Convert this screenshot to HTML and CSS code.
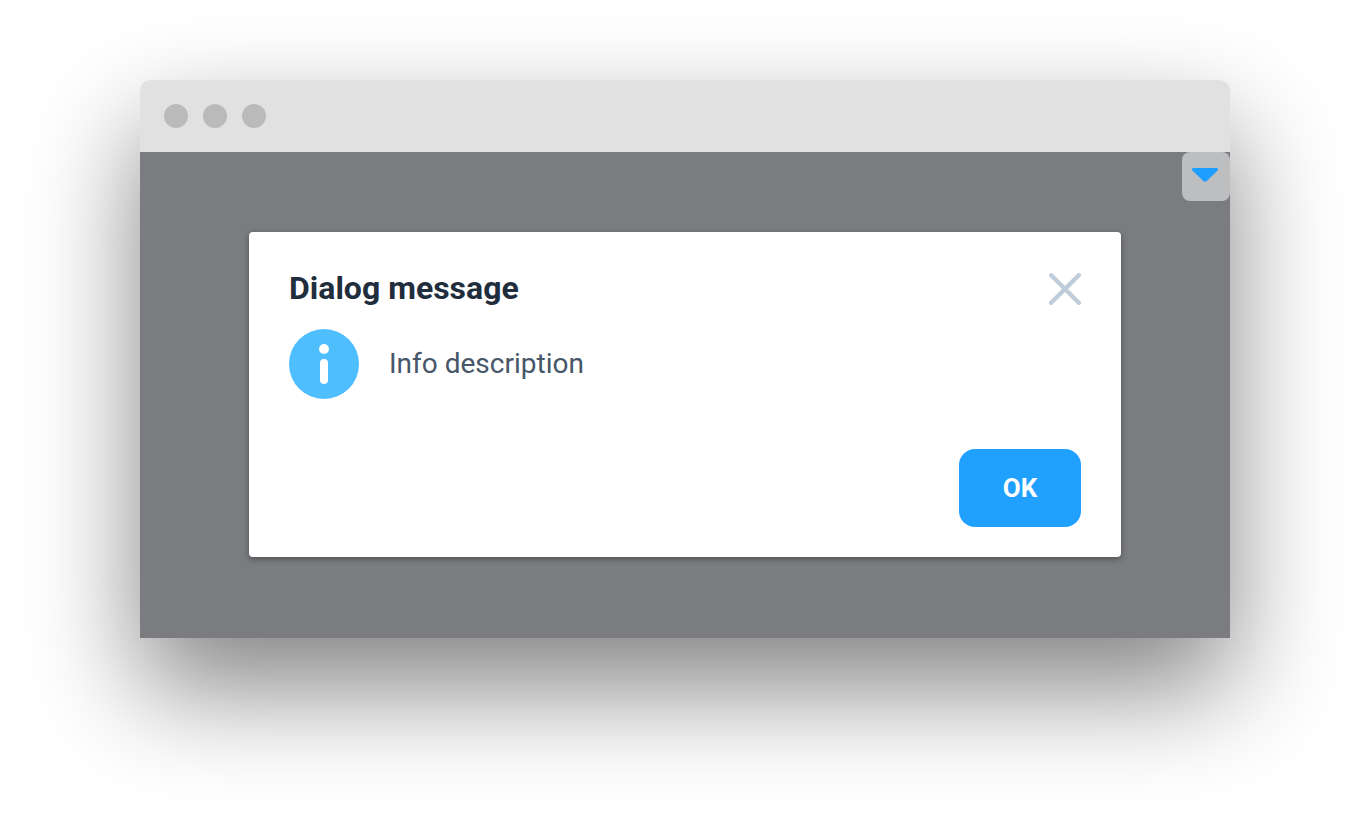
FILE: index.html
```html
<!DOCTYPE html>
<html lang="en">
<head>
<meta charset="utf-8">
<meta name="viewport" content="width=device-width, initial-scale=1">
<title>Dialog message</title>
<link rel="stylesheet" href="styles.css">
</head>
<body>
<div class="window">
  <header class="titlebar">
    <span class="dot"></span>
    <span class="dot"></span>
    <span class="dot"></span>
  </header>
  <main class="viewport">
    <button class="menu-toggle" type="button" aria-label="Open menu">
      <svg width="28" height="16" viewBox="0 0 28 16" aria-hidden="true"><path d="M2.600 1H25.400Q27.800 1.400 26.600 3.600L15.800 14Q14 15.600 12.200 14L1.400 3.600Q.2 1.400 2.600 1Z" fill="#1e9fff"/></svg>
    </button>
    <section class="dialog" role="dialog" aria-labelledby="dialog-title">
      <div class="dialog-head">
        <h1 class="dialog-title" id="dialog-title">Dialog message</h1>
        <button class="close" type="button" aria-label="Close">
          <svg width="32" height="32" viewBox="0 0 32 32" aria-hidden="true"><path d="M2.200 2.200L29.800 29.800M29.800 2.200L2.200 29.800" stroke="#bfccd9" stroke-width="4.400" stroke-linecap="round"/></svg>
        </button>
      </div>
      <div class="dialog-body">
        <svg width="70" height="70" viewBox="0 0 70 70" aria-hidden="true"><circle cx="35" cy="35" r="35" fill="#4fbeff"/><circle cx="35" cy="20" r="5" fill="#fff"/><rect x="31" y="30" width="8" height="25" rx="4" fill="#fff"/></svg>
        <p class="message">Info description</p>
      </div>
      <div class="dialog-actions">
        <button class="ok" type="button">OK</button>
      </div>
    </section>
  </main>
</div>
</body>
</html>
```
FILE: styles.css
```css
* {
  box-sizing: border-box;
}

body {
  margin: 0;
  padding: 80px 140px 200px;
  background: #fff;
  font-family: Roboto, "Liberation Sans", sans-serif;
  overflow: hidden;
}

.window {
  border-radius: 10px 10px 0 0;
  box-shadow: 0 50px 110px rgba(0, 0, 0, 0.49);
}

.titlebar {
  display: flex;
  align-items: center;
  gap: 15px;
  height: 72px;
  padding: 0 24px;
  border-radius: 10px 10px 0 0;
  background: #e1e1e1;
}

.dot {
  width: 24px;
  height: 24px;
  border-radius: 50%;
  background: #bababa;
}

.viewport {
  position: relative;
  padding: 80px 10% 81px;
  background: #7b7c80;
}

.menu-toggle {
  position: absolute;
  top: 0;
  right: 0;
  display: flex;
  align-items: center;
  justify-content: center;
  width: 48px;
  height: 49px;
  padding: 0 2px 4px 0;
  border: 0;
  border-radius: 8px;
  background: #bdbec0;
}

.dialog {
  padding: 40px 40px 30px;
  border-radius: 4px;
  background: #fff;
  box-shadow: 0 2px 6px rgba(0, 0, 0, 0.36);
}

.dialog-head {
  display: flex;
  align-items: flex-start;
  justify-content: space-between;
  height: 57px;
}

.dialog-title {
  margin: 0;
  color: #1f2d3d;
  font-size: 32px;
  line-height: 32px;
  font-weight: 700;
}

.close {
  display: flex;
  margin-top: 1px;
  padding: 0;
  border: 0;
  background: none;
}

.dialog-body {
  display: flex;
  align-items: center;
  gap: 30px;
}

.message {
  margin: 0;
  color: #475669;
  font-size: 28px;
  line-height: 40px;
}

.dialog-actions {
  display: flex;
  justify-content: flex-end;
  margin-top: 50px;
}

.ok {
  width: 122px;
  height: 78px;
  padding: 0;
  border: 0;
  border-radius: 16px;
  background: #20a0ff;
  color: #fff;
  font: 700 26px/32px Roboto, "Liberation Sans", sans-serif;
}
```
